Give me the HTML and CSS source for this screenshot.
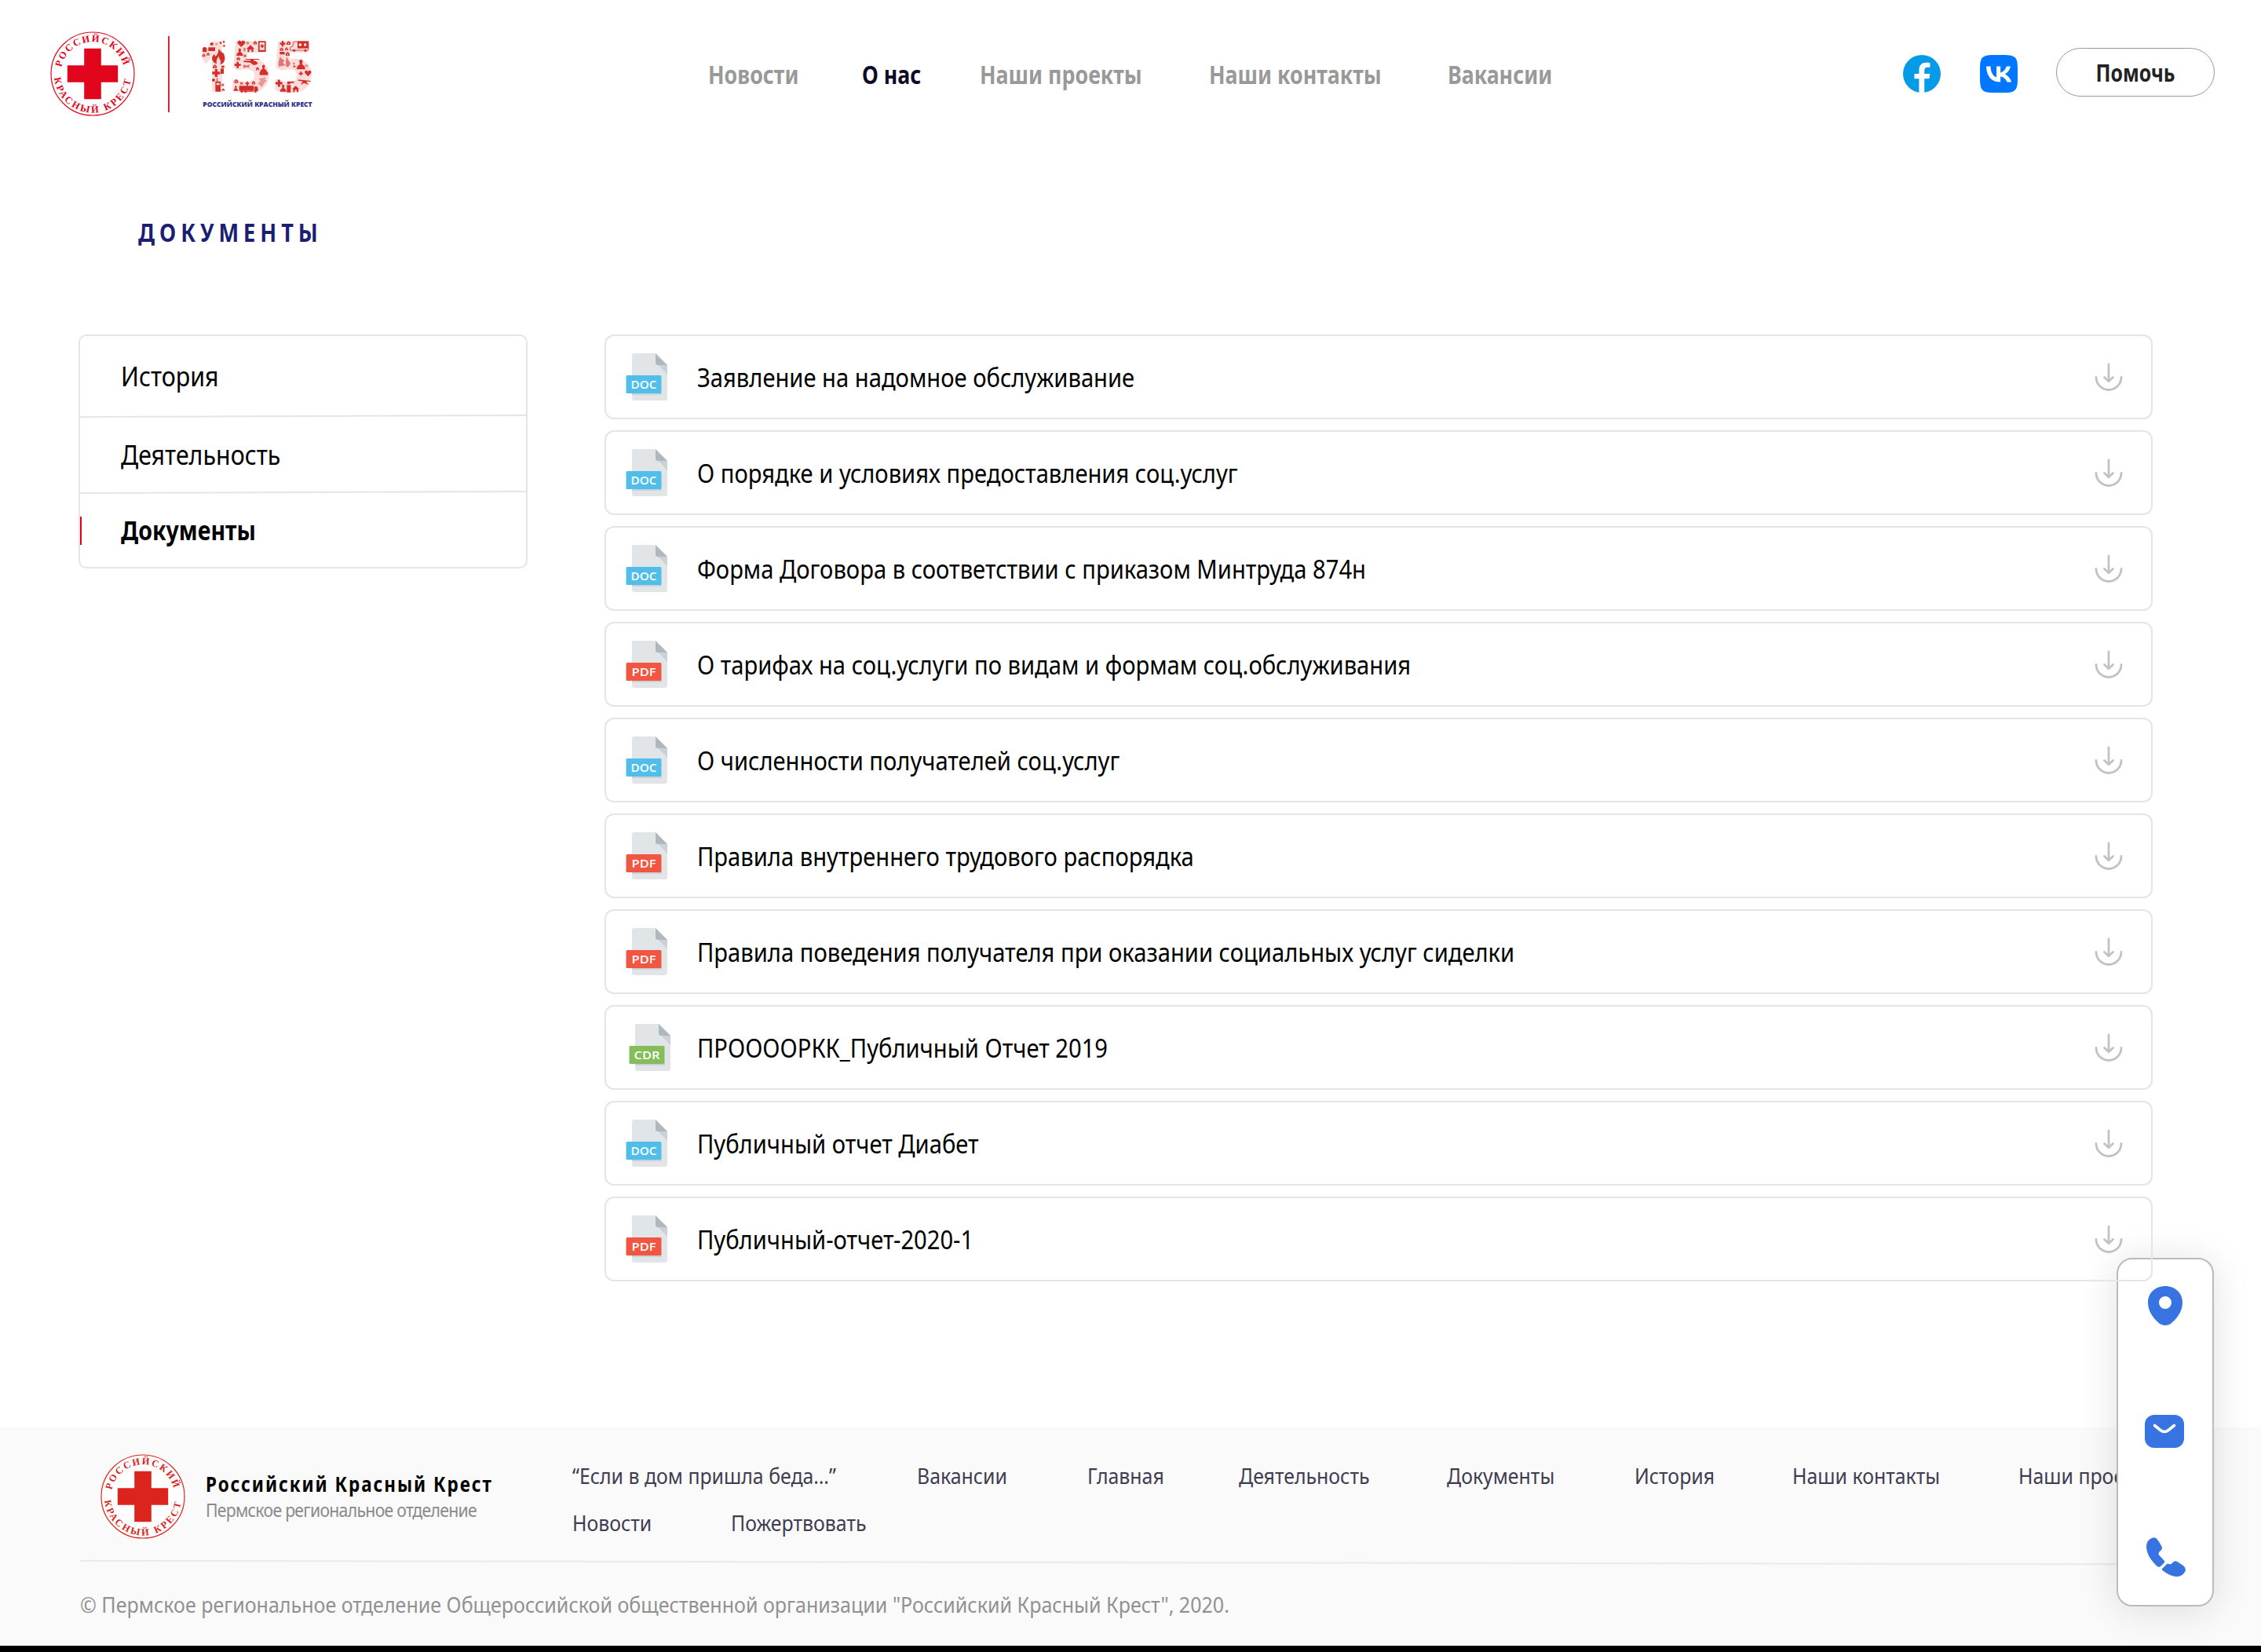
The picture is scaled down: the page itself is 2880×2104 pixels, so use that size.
FILE: index.html
```html
<!DOCTYPE html>
<html lang="ru">
<head>
<meta charset="utf-8">
<title>Документы — Российский Красный Крест</title>
<link rel="stylesheet" href="styles.css">
</head>
<body>
<svg width="0" height="0" class="defs">
  <defs>
    <path id="arc-top" d="M-39.9 -8.2A40.7 40.7 0 0 1 39.9 -8.2"/>
    <path id="arc-bottom" d="M-48.8 5A49 49 0 0 0 48.8 5"/>
    <symbol id="emblem" viewBox="-54 -54 108 108">
      <circle r="53" fill="#fff" stroke="currentColor" stroke-width="1.2"/>
      <path d="M-10.8 -32.2H10.8V-10.8H32.2V10.8H10.8V32.2H-10.8V10.8H-32.2V-10.8H-10.8Z" fill="currentColor"/>
      <text class="ring" textLength="109"><textPath href="#arc-top" textLength="109">РОССИЙСКИЙ</textPath></text>
      <text class="ring" textLength="142"><textPath href="#arc-bottom" textLength="142">КРАСНЫЙ КРЕСТ</textPath></text>
    </symbol>
    <symbol id="sheet" viewBox="0 0 54 60">
      <path d="M10 0H38L53 15V57Q53 60 50 60H11Q8 60 8 57V2Q8 0 10 0Z" fill="#e2e5e8"/>
      <path d="M40.500 14L53 27V15Z" fill="#cad1d8"/>
      <path d="M38 0L53 15H41Q38 15 38 12Z" fill="#b0b7bd"/>
      <path d="M8 51H46V53H8Z" fill="#cad1d8"/>
      <rect x="0.500" y="28" width="45" height="23" rx="1.500" fill="currentColor"/>
    </symbol>
    <symbol id="download" viewBox="0 0 36 38">
      <g fill="none" stroke="#c2c2c2" stroke-width="2.800" stroke-linecap="round" stroke-linejoin="round">
        <path d="M18 2V23M12.500 18.500L18 23.700L23.500 18.500"/>
        <path d="M2 18.500A16 16 0 0 0 34 18.500"/>
      </g>
    </symbol>
    <path id="plus" d="M-4 -12H4V-4H12V4H4V12H-4V4H-12V-4H-4Z"/>
    <path id="heart" d="M0 12L-12 0Q-16 -8 -8 -11Q-2 -12 0 -6Q2 -12 8 -11Q16 -8 12 0Z"/>
    <path id="house" d="M-15 0L0 -14L15 0H11V13H4V4H-4V13H-11V0Z"/>
    <path id="person" d="M-5 -10A6 6 0 1 1 5 -10A6 6 0 0 1 3 -3Q14 0 15 14H-15Q-14 0 -3 -3Q-6 -6 -5 -10Z"/>
    <path id="kit" fill-rule="evenodd" d="M-8 -4H-4V-8H4V-4H8V7H-8ZM-2 -2V4H2V-2Z"/>
  </defs>
</svg>

<header class="header">
  <div class="brand">
    <svg class="emblem"><use href="#emblem"/></svg>
    <span class="brand-line"></span>
    <svg class="jubilee" viewBox="640 80 450 280">
      <g class="digits">
        <text x="640" y="291" textLength="114" lengthAdjust="spacingAndGlyphs">1</text>
        <text x="757" y="291" textLength="164" lengthAdjust="spacingAndGlyphs">5</text>
        <text x="920" y="291" textLength="164" lengthAdjust="spacingAndGlyphs">5</text>
      </g>
      <g fill="#d22f2a">
        <path d="M716 125Q726 138 736 144Q745 165 735 178Q730 184 722 185Q729 174 719 163Q717 157 718 153Q705 168 709 183Q690 177 691 160Q694 149 700 146L704 155Q717 145 716 125Z"/>
        <path d="M655 138V123Q663 113 671 123V138Z"/><path d="M684 104H696V109H684Z"/>
        <circle cx="690" cy="107" r="6"/><path d="M677 120H703V134H677Z"/>
        <circle cx="724" cy="103" r="4"/><circle cx="708" cy="108" r="4" opacity=".5"/><use href="#plus" transform="translate(736 99) scale(.4)"/><use href="#plus" transform="translate(737 114) scale(.4)"/>
        <use href="#kit" transform="translate(660 151) scale(.7)"/><use href="#house" transform="translate(676 146) scale(.45)"/>
        <use href="#plus" transform="translate(707 218) scale(1.250)"/><use href="#kit" transform="translate(702 194) scale(.9)"/>
        <path d="M724 201H736V221H724ZM727 190H733V198H727Z"/><use href="#plus" transform="translate(735 194) scale(.45)"/>
        <circle cx="697" cy="245" r="6"/><path fill-rule="evenodd" d="M709 237H712V250H724V289H704V250H709ZM708 256V264H720V256Z"/>
        <use href="#kit" transform="translate(732 263) scale(.6)"/><use href="#house" transform="translate(734 282) scale(.4)"/>
        <use href="#heart" transform="translate(803 106) scale(1.100)"/><circle cx="827" cy="103" r="6" opacity=".5"/><use href="#kit" transform="translate(856 103) scale(.8)"/>
        <path fill-rule="evenodd" d="M868 96H897V137H868ZM873 101V130H892V101Z"/><use href="#plus" transform="translate(883 115) scale(.6)"/>
        <use href="#house" transform="translate(838 125)"/><use href="#person" transform="translate(797 140) scale(.85)"/>
        <path d="M813 119L820 125L816 138L810 130Z" opacity=".6"/><use href="#kit" transform="translate(792 164) scale(.8)"/><use href="#kit" transform="translate(817 152) scale(.6)"/>
        <use href="#plus" transform="translate(789 187)"/>
        <path d="M819 164H872V167H850V171Q864 174 866 181Q862 189 848 187L838 178L812 176V171H838V167H819Z"/>
        <path d="M812 186L824 190L836 184L831 195L836 199L822 195L811 199Z" opacity=".7"/>
        <use href="#person" transform="translate(888 204) scale(.9)"/><path d="M873 214H905V226H873Z"/><use href="#house" transform="translate(865 202) scale(.5)"/>
        <path d="M870 240L898 234L892 245L902 246L889 259L882 272L866 258L876 249Z" opacity=".4"/>
        <use href="#kit" transform="translate(784 250) scale(.9)"/><use href="#kit" transform="translate(804 257) scale(.6)"/><use href="#plus" transform="translate(826 258) scale(.65)"/><use href="#kit" transform="translate(850 256) scale(.8)"/>
        <use href="#person" transform="translate(782 278) scale(.6)"/>
        <path d="M795 267H851V286H795ZM853 270H864L867 279V288H853ZM799 288H850V290H799Z"/><circle cx="805" cy="289" r="4"/><circle cx="857" cy="289" r="4"/><circle cx="820" cy="289" r="4"/>
        <use href="#plus" transform="translate(961 106) scale(.9)"/><use href="#kit" transform="translate(984 104) scale(.9)"/>
        <path d="M1018 96H1061V124H1018Z"/><path fill="none" stroke="#d22f2a" stroke-width="2.500" d="M1018 98H1004L1000 115L990 120V131H1060V122"/><circle cx="1005" cy="132" r="5"/><circle cx="1048" cy="132" r="5"/><circle cx="1028" cy="110" r="5" fill="#fff"/><circle cx="1047" cy="110" r="5" fill="#fff"/>
        <use href="#kit" transform="translate(957 128) scale(.8)"/><use href="#kit" transform="translate(976 126) scale(.7)"/><path d="M950 137H969V147H950Z"/><use href="#kit" transform="translate(980 146) scale(.9)"/>
        <path d="M951 156L958 163L968 171L962 179L972 188L946 194L945 176Z" opacity=".6"/>
        <path d="M977 155L982 167L991 181L984 194H974L973 172Z" opacity=".6"/>
        <use href="#person" transform="translate(1031 188) scale(1.100)"/><circle cx="1004" cy="182" r="4" opacity=".6"/><use href="#plus" transform="translate(1006 193) scale(.4)"/><circle cx="1052" cy="190" r="6" opacity=".4"/>
        <use href="#plus" transform="translate(1031 220) scale(.65)"/><use href="#heart" transform="translate(1058 219) scale(.95)"/>
        <path d="M1020 243L1068 248V251L1051 250L1060 263L1044 256L1029 263L1038 250L1020 247Z"/>
        <use href="#plus" transform="translate(947 257) scale(1.100)"/><use href="#person" transform="translate(963 278) scale(.8)"/>
        <path d="M977 264H992V292H977ZM979 250H1005V256H990V261H979Z"/><use href="#house" transform="translate(1011 279) scale(.9)"/>
      </g>
      <text class="jubilee-caption" x="656" y="348" textLength="418" lengthAdjust="spacingAndGlyphs">РОССИЙСКИЙ КРАСНЫЙ КРЕСТ</text>
    </svg>
  </div>
  <nav class="nav">
    <a>Новости</a><a class="active">О нас</a><a>Наши проекты</a><a>Наши контакты</a><a>Вакансии</a>
  </nav>
  <div class="actions">
    <svg class="social" viewBox="5 5 38 38"><circle cx="24" cy="24" r="19" fill="#039be5"/><path fill="#fff" d="M26.572 29.036h4.917l.772-4.995h-5.690v-2.730c0-2.075.678-3.915 2.619-3.915h3.119v-4.359c-.548-.074-1.707-.236-3.897-.236-4.573 0-7.254 2.415-7.254 7.917v3.323h-4.701v4.995h4.701v13.729C22.089 42.905 23.032 43 24 43c.875 0 1.729-.08 2.572-.194V29.036z"/></svg>
    <svg class="social" viewBox="0 0 48 48"><path fill="#07f" d="M0 23.040C0 12.180 0 6.750 3.370 3.370 6.750 0 12.180 0 23.040 0h1.920c10.860 0 16.290 0 19.670 3.370C48 6.750 48 12.180 48 23.040v1.920c0 10.860 0 16.290-3.370 19.670C41.250 48 35.820 48 24.960 48h-1.920c-10.860 0-16.290 0-19.670-3.370C0 41.250 0 35.820 0 24.960z"/><path fill="#fff" d="M25.540 34.580c-10.940 0-17.180-7.500-17.440-19.980h5.480c.18 9.160 4.220 13.040 7.420 13.840V14.600h5.160v7.900c3.160-.34 6.480-3.940 7.600-7.900h5.160c-.86 4.880-4.460 8.480-7.020 9.960 2.560 1.200 6.660 4.340 8.220 10.020h-5.680c-1.220-3.800-4.260-6.740-8.280-7.140v7.140z"/></svg>
    <a class="help"><span>Помочь</span></a>
  </div>
</header>

<main class="main">
  <h1 class="title">ДОКУМЕНТЫ</h1>
  <div class="columns">
    <aside class="side">
      <a class="side-item first"><span>История</span></a>
      <span class="side-rule"></span>
      <a class="side-item"><span>Деятельность</span></a>
      <span class="side-rule"></span>
      <a class="side-item current"><span>Документы</span></a>
    </aside>
    <section class="docs">
      <a class="doc"><svg class="file" viewBox="0 0 54 60"><use href="#sheet" class="blue"/><text x="6.500" y="44.500" textLength="33" lengthAdjust="spacingAndGlyphs">DOC</text></svg><span class="name">Заявление на надомное обслуживание</span><svg class="dl"><use href="#download"/></svg></a>
      <a class="doc"><svg class="file" viewBox="0 0 54 60"><use href="#sheet" class="blue"/><text x="6.500" y="44.500" textLength="33" lengthAdjust="spacingAndGlyphs">DOC</text></svg><span class="name">О порядке и условиях предоставления соц.услуг</span><svg class="dl"><use href="#download"/></svg></a>
      <a class="doc"><svg class="file" viewBox="0 0 54 60"><use href="#sheet" class="blue"/><text x="6.500" y="44.500" textLength="33" lengthAdjust="spacingAndGlyphs">DOC</text></svg><span class="name">Форма Договора в соответствии с приказом Минтруда 874н</span><svg class="dl"><use href="#download"/></svg></a>
      <a class="doc"><svg class="file" viewBox="0 0 54 60"><use href="#sheet" class="red"/><text x="7.500" y="44.500" textLength="31" lengthAdjust="spacingAndGlyphs">PDF</text></svg><span class="name">О тарифах на соц.услуги по видам и формам соц.обслуживания</span><svg class="dl"><use href="#download"/></svg></a>
      <a class="doc"><svg class="file" viewBox="0 0 54 60"><use href="#sheet" class="blue"/><text x="6.500" y="44.500" textLength="33" lengthAdjust="spacingAndGlyphs">DOC</text></svg><span class="name">О численности получателей соц.услуг</span><svg class="dl"><use href="#download"/></svg></a>
      <a class="doc"><svg class="file" viewBox="0 0 54 60"><use href="#sheet" class="red"/><text x="7.500" y="44.500" textLength="31" lengthAdjust="spacingAndGlyphs">PDF</text></svg><span class="name">Правила внутреннего трудового распорядка</span><svg class="dl"><use href="#download"/></svg></a>
      <a class="doc"><svg class="file" viewBox="0 0 54 60"><use href="#sheet" class="red"/><text x="7.500" y="44.500" textLength="31" lengthAdjust="spacingAndGlyphs">PDF</text></svg><span class="name">Правила поведения получателя при оказании социальных услуг сиделки</span><svg class="dl"><use href="#download"/></svg></a>
      <a class="doc cdr"><svg class="file" viewBox="0 0 54 60"><use href="#sheet" class="green"/><text x="6.500" y="44.500" textLength="33" lengthAdjust="spacingAndGlyphs">CDR</text></svg><span class="name">ПРООООРКК_Публичный Отчет 2019</span><svg class="dl"><use href="#download"/></svg></a>
      <a class="doc"><svg class="file" viewBox="0 0 54 60"><use href="#sheet" class="blue"/><text x="6.500" y="44.500" textLength="33" lengthAdjust="spacingAndGlyphs">DOC</text></svg><span class="name">Публичный отчет Диабет</span><svg class="dl"><use href="#download"/></svg></a>
      <a class="doc"><svg class="file" viewBox="0 0 54 60"><use href="#sheet" class="red"/><text x="7.500" y="44.500" textLength="31" lengthAdjust="spacingAndGlyphs">PDF</text></svg><span class="name">Публичный-отчет-2020-1</span><svg class="dl"><use href="#download"/></svg></a>
    </section>
  </div>
</main>

<footer class="footer">
  <div class="footer-top">
    <div class="footer-brand">
      <svg class="emblem footer-emblem"><use href="#emblem"/></svg>
      <div>
        <div class="org">Российский Красный Крест</div>
        <div class="branch">Пермское региональное отделение</div>
      </div>
    </div>
    <div class="links">
      <div class="links-row"><a>“Если в дом пришла беда…”</a><a>Вакансии</a><a>Главная</a><a>Деятельность</a><a>Документы</a><a>История</a><a>Наши контакты</a><a>Наши проекты</a></div>
      <div class="links-row second"><a>Новости</a><a>Пожертвовать</a></div>
    </div>
  </div>
  <div class="footer-rule"></div>
  <p class="copy">© Пермское региональное отделение Общероссийской общественной организации "Российский Красный Крест", 2020.</p>
</footer>

<div class="contacts">
  <svg class="pin" viewBox="0 0 44 50"><path fill="#3773e1" fill-rule="evenodd" d="M22 0C35 0 44 9 44 21C44 33 36 42 29 48Q22 52 15 48C8 42 0 33 0 21C0 9 9 0 22 0ZM22 13A8 8 0 1 0 22 29A8 8 0 1 0 22 13Z"/></svg>
  <svg class="mail" viewBox="0 0 50 42"><rect width="50" height="42" rx="12" fill="#3773e1"/><path d="M12.500 13.500L20 19.500Q25 23.500 30 19.500L37.500 13.500" fill="none" stroke="#fff" stroke-width="3.600" stroke-linecap="round"/></svg>
  <svg class="phone" viewBox="0 0 50 50"><path fill="#3773e1" d="M13 1.500Q9 -1 5 2Q0 5 0 12C0 21 7 31 14 37Q16 38.500 18 37L22.500 32.500Q24 31 22.500 29.500L16.500 23Q14.500 20.500 16.500 18.500L19 16Q21 13.500 19.200 11Q16 5 13 1.500Z"/><path fill="#3773e1" d="M20.500 42Q19 41 20.500 39.500L25.500 34.500Q27 33 29 34Q31 35 32.500 33L34.500 31.200Q37 29.500 39.500 31L47 36Q51 39 49.500 43Q46 50 39 50C32 50 26 46 20.500 42Z"/></svg>
</div>
</body>
</html>
```
FILE: styles.css
```css
* { box-sizing: border-box; }

body {
  margin: 0;
  width: 2880px;
  height: 2104px;
  position: relative;
  overflow: hidden;
  background: #fff;
  color: #000;
  font-family: "Noto Sans", "Open Sans", sans-serif;
}

.defs { position: absolute; }

/* The humanist face is set slightly condensed throughout */
.nav a, .title, .side-item span, .name, .org, .branch, .links a, .copy {
  display: block;
  transform-origin: 0 50%;
  transform: scaleX(var(--condense));
}

/* Header */
.header {
  height: 188px;
  display: flex;
  align-items: center;
}
.brand {
  width: 902px;
  padding-left: 64px;
  display: flex;
  align-items: center;
}
.emblem { width: 108px; height: 108px; color: #e1061b; }
.ring {
  font: bold 12.5px "Liberation Serif", serif;
  fill: currentColor;
}
.brand-line {
  width: 2px;
  height: 97px;
  margin-left: 42px;
  background: #dc2438;
}
.jubilee { width: 150px; height: 93.33px; margin-left: 37px; overflow: visible; }
.digits text {
  font: 800 272px "Open Sans", sans-serif;
  fill: #fbdedb;
}
.jubilee-caption {
  font: 800 25px "Open Sans", sans-serif;
  fill: #2b2f84;
}
.nav {
  --condense: 0.85;
  width: 1522px;
  display: grid;
  grid-template-columns: 196px 150px 292px 304px auto;
  font-size: 31.5px;
  font-weight: 700;
  color: #999;
  white-space: nowrap;
}
.nav .active { color: #0d0b26; }
.actions {
  display: flex;
  align-items: center;
}
.social { width: 48px; height: 48px; margin-right: 50px; }
.help {
  width: 202px;
  height: 62px;
  margin: 0 0 4px -1px;
  border: 1.5px solid #999;
  border-radius: 31px;
  font-size: 30px;
  font-weight: 700;
  line-height: 61px;
  text-align: center;
  color: #222;
}
.help span { display: block; transform: scaleX(0.83); }

/* Content */
.title {
  --condense: 0.85;
  margin: 88px 0 110px 176px;
  font-size: 32px;
  line-height: 40px;
  letter-spacing: 7px;
  color: #1b1f74;
}
.columns {
  display: flex;
  align-items: flex-start;
  gap: 98px;
  padding-left: 100px;
}
.side {
  --condense: 0.893;
  width: 572px;
  height: 298px;
  border: 2px solid #e5e5e5;
  border-radius: 10px;
  display: flex;
  flex-direction: column;
}
.side-item {
  height: 95px;
  padding-left: 52px;
  font-size: 34px;
  line-height: 97px;
}
.side-item.first { height: 101px; line-height: 103px; }
.side-rule {
  height: 2px;
  background: #e5e5e5;
  transform: rotate(-0.18deg);
}
.side-item.current {
  --condense: 0.84;
  font-weight: 700;
  background: linear-gradient(#e2001a, #e2001a) 0 31px / 2px 36px no-repeat;
}
.docs {
  position: relative;
  z-index: 2;
  width: 1972px;
  display: flex;
  flex-direction: column;
  gap: 14px;
}
.doc {
  height: 108px;
  padding: 0 36px 0 25px;
  border: 2px solid #e5e5e5;
  border-radius: 12px;
  display: flex;
  align-items: center;
}
.file { width: 54px; height: 60px; margin-right: 37px; }
.file text {
  font: 600 14px "Open Sans", sans-serif;
  fill: #fff;
}
.cdr .file { margin: 0 33px 0 4px; }
.blue { color: #50bee8; }
.red { color: #f15642; }
.green { color: #84bd5a; }
.name { --condense: 0.911; flex: 1; font-size: 32px; white-space: nowrap; }
.dl { width: 36px; height: 38px; margin-top: 2px; }

/* Footer */
.footer {
  height: 286px;
  margin-top: 186px;
  padding: 34px 0 0 102px;
  background: #fafafa;
  border-bottom: 8px solid #000;
}
.footer-top { display: flex; height: 135px; }
.footer-brand { display: flex; width: 627px; padding-left: 26px; }
.footer-emblem { color: #db241c; margin-right: 26px; }
.org {
  --condense: 0.85;
  margin-top: 18px;
  font-size: 26.5px;
  font-weight: 700;
  line-height: 40px;
  letter-spacing: 2.25px;
  white-space: nowrap;
}
.branch {
  --condense: 0.904;
  font-size: 23.5px;
  line-height: 27px;
  letter-spacing: -0.8px;
  color: #8a8a8a;
  white-space: nowrap;
}
.links { --condense: 0.888; font-size: 28px; line-height: 60px; color: #3f3c52; }
.links-row { display: grid; grid-template-columns: 439px 217px 193px 265px 239px 201px 288px 200px; white-space: nowrap; margin-top: -3px; }
.links-row.second { grid-template-columns: 202px 300px; margin-top: 0; }
.footer-rule {
  width: 2640px;
  height: 2px;
  margin-top: 2px;
  background: #e9e9ee;
  transform: rotate(0.1deg);
}
.copy {
  --condense: 0.91;
  margin: 31px 0 0;
  font-size: 27.5px;
  line-height: 44px;
  color: #919191;
  white-space: nowrap;
}

/* Floating contact panel, sits beneath the document borders */
.contacts {
  position: absolute;
  z-index: 1;
  top: 1602px;
  left: 2696px;
  width: 124px;
  height: 444px;
  padding: 34px 0 36px;
  border: 2px solid #bbb;
  border-radius: 20px;
  background: #fff;
  box-shadow: 0 4px 50px rgba(0, 0, 0, 0.12);
  display: flex;
  flex-direction: column;
  align-items: center;
  justify-content: space-between;
}
.pin { width: 44px; height: 50px; }
.mail { width: 50px; height: 42px; margin-right: 2px; }
.phone { width: 50px; height: 50px; margin-left: 2px; }
```
